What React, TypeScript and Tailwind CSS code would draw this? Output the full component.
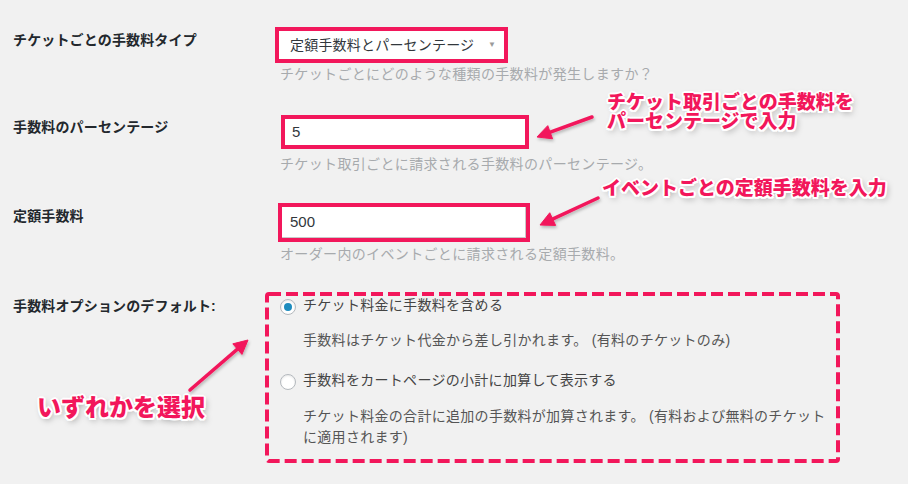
import React from "react";

const PINK = "#f2175b";

type Pt = { x1: number; y1: number; x2: number; y2: number };

function Arrow({ x1, y1, x2, y2 }: Pt) {
  const dx = x2 - x1;
  const dy = y2 - y1;
  const len = Math.hypot(dx, dy);
  const ux = dx / len;
  const uy = dy / len;
  const hl = 14;
  const hw = 7;
  const bx = x2 - ux * hl;
  const by = y2 - uy * hl;
  const nx = -uy;
  const ny = ux;
  const pts = `${x2},${y2} ${bx + nx * hw},${by + ny * hw} ${bx - nx * hw},${by - ny * hw}`;
  return (
    <g>
      <line x1={x1} y1={y1} x2={bx + ux * 2} y2={by + uy * 2} stroke={PINK} strokeWidth={3.5} strokeLinecap="round" />
      <polygon points={pts} fill={PINK} stroke={PINK} strokeWidth={1} strokeLinejoin="round" />
    </g>
  );
}

const annot =
  "absolute font-black whitespace-nowrap text-[#f2175b] [text-shadow:-2px_0_0_#fff,2px_0_0_#fff,0_-2px_0_#fff,0_2px_0_#fff,-1.5px_-1.5px_0_#fff,1.5px_1.5px_0_#fff,-1.5px_1.5px_0_#fff,1.5px_-1.5px_0_#fff,2px_3px_6px_rgba(0,0,0,0.35)]";

function Radio({ checked }: { checked?: boolean }) {
  return (
    <span className="flex h-[16px] w-[16px] shrink-0 items-center justify-center rounded-full border border-[#b4b9be] bg-white shadow-[inset_0_1px_2px_rgba(0,0,0,0.1)]">
      {checked && <span className="h-[8px] w-[8px] rounded-full bg-[#1e8cbe]" />}
    </span>
  );
}

export default function App() {
  return (
    <div className="relative h-[484px] w-[908px] overflow-hidden bg-[#f1f1f1] font-['Liberation_Sans','Noto_Sans_CJK_JP',sans-serif] text-[14px]">
      <div className="pt-[27px]">
        {/* Row 1 */}
        <div className="flex">
          <div className="w-[280px] shrink-0 pl-[13px] pt-[3px] text-[14px] font-bold leading-[20px] tracking-[0.15px] text-[#23282d]">
            チケットごとの手数料タイプ
          </div>
          <div>
            <div className="-ml-[5px] flex h-[36px] w-[233px] items-center justify-between border-4 border-[#f2175b] bg-white pl-[11px] pr-[8px] text-[14px] tracking-[0.2px] text-[#32373c]">
              <span>定額手数料とパーセンテージ</span>
              <span className="text-[8px] text-[#9a9a9a]">▼</span>
            </div>
            <p className="mt-[2px] text-[14px] leading-[18px] tracking-[0.35px] text-[#a7aaad]">
              チケットごとにどのような種類の手数料が発生しますか？
            </p>
          </div>
        </div>

        {/* Row 2 */}
        <div className="mt-[32px] flex">
          <div className="w-[280px] shrink-0 pl-[13px] pt-[2px] text-[14px] font-bold leading-[20px] tracking-[0.15px] text-[#23282d]">
            手数料のパーセンテージ
          </div>
          <div>
            <div className="ml-[1px] flex h-[34px] w-[248px] items-center border-4 border-[#f2175b] bg-white pl-[7px] text-[15px] text-[#32373c]">
              5
            </div>
            <p className="mt-[6px] text-[14px] leading-[18px] tracking-[0.35px] text-[#a7aaad]">
              チケット取引ごとに請求される手数料のパーセンテージ。
            </p>
          </div>
        </div>

        {/* Row 3 */}
        <div className="mt-[30px] flex">
          <div className="w-[280px] shrink-0 pl-[13px] pt-[3px] text-[14px] font-bold leading-[20px] tracking-[0.15px] text-[#23282d]">
            定額手数料
          </div>
          <div>
            <div className="-ml-[2px] h-[39px] w-[252px] border-4 border-[#f2175b] bg-white">
              <div className="flex h-full w-full items-center border-b border-r border-[#c8c8c8] pl-[8px] text-[15px] text-[#32373c]">
                500
              </div>
            </div>
            <p className="mt-[3px] text-[14px] leading-[18px] tracking-[0.35px] text-[#a7aaad]">
              オーダー内のイベントごとに請求される定額手数料。
            </p>
          </div>
        </div>

        {/* Row 4 */}
        <div className="mt-[29px] flex">
          <div className="w-[280px] shrink-0 pl-[13px] pt-[4px] text-[14px] font-bold leading-[20px] tracking-[0.15px] text-[#23282d]">
            手数料オプションのデフォルト:
          </div>
          <div className="pt-[5px]">
            <label className="flex h-[20px] items-center gap-[7px] text-[14px] tracking-[0.3px] text-[#444]">
              <Radio checked />
              <span className="-mt-[3px]">チケット料金に手数料を含める</span>
            </label>
            <p className="mt-[13px] pl-[23px] text-[14px] leading-[20px] tracking-[0.3px] text-[#555]">
              手数料はチケット代金から差し引かれます。 (有料のチケットのみ)
            </p>
            <label className="mt-[22px] flex h-[20px] items-center gap-[7px] text-[14px] tracking-[0.3px] text-[#444]">
              <Radio />
              <span className="-mt-[3px]">手数料をカートページの小計に加算して表示する</span>
            </label>
            <p className="mt-[14px] w-[550px] pl-[23px] text-[14px] leading-[21px] tracking-[0.3px] text-[#555]">
              チケット料金の合計に追加の手数料が加算されます。 (有料および無料のチケットに適用されます)
            </p>
          </div>
        </div>
      </div>

      {/* Annotation overlay */}
      <svg className="pointer-events-none absolute left-0 top-0" width={908} height={484}>
        <defs>
          <filter id="sh" x="-20%" y="-20%" width="140%" height="140%">
            <feDropShadow dx="1" dy="2" stdDeviation="1.5" floodColor="#000" floodOpacity="0.25" />
          </filter>
        </defs>
        <rect x={267} y={294} width={571} height={167} rx={2} fill="none" stroke={PINK} strokeWidth={4} strokeDasharray="12 5" />
        <g filter="url(#sh)">
          <Arrow x1={592} y1={117} x2={537} y2={137} />
          <Arrow x1={598} y1={198} x2={540} y2={225} />
          <Arrow x1={190} y1={390} x2={248} y2={340} />
        </g>
      </svg>

      <div className={`${annot} left-[607px] top-[93px] text-[19px] leading-[19px]`}>
        チケット取引ごとの手数料を
        <br />
        パーセンテージで入力
      </div>
      <div className={`${annot} left-[602px] top-[179px] text-[19px] leading-[19px]`}>
        イベントごとの定額手数料を入力
      </div>
      <div className={`${annot} left-[37px] top-[395px] text-[24px] leading-[25px]`}>
        いずれかを選択
      </div>
    </div>
  );
}
